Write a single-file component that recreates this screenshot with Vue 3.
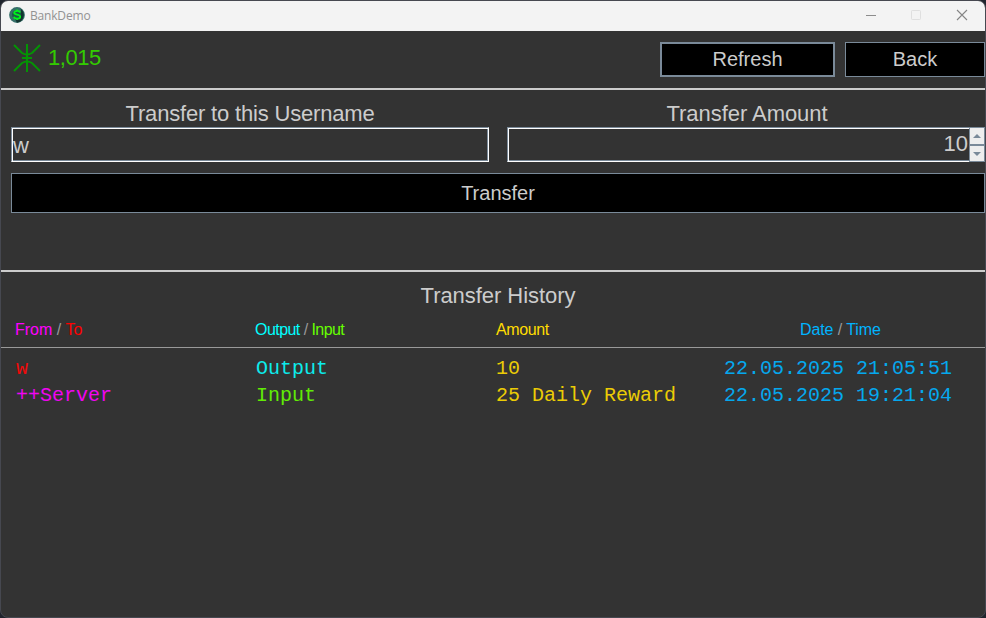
<script setup>
import { ref } from 'vue'

const username = ref('w')
const amount = ref('10')
const history = [
  { name: 'w', kind: 'Output', amount: '10', date: '22.05.2025 21:05:51' },
  { name: '++Server', kind: 'Input', amount: '25 Daily Reward', date: '22.05.2025 19:21:04' },
]
</script>

<template>
  <div class="desktop">
    <div class="window">
      <header class="titlebar">
        <svg class="app-icon" viewBox="0 0 16 16" width="16" height="16">
          <circle cx="8" cy="8" r="7.9" fill="#356f69" />
          <path d="M11.8 1.8A7.9 7.9 0 0 1 8 15.8L6 12L12 5Z" fill="#12342f" />
          <circle cx="7.6" cy="7.8" r="4.6" fill="#1a5c45" />
          <path d="M11 5.6C10.7 4.3 9.5 3.9 8.2 3.9C6.4 3.9 5.2 4.6 5.2 5.8C5.2 8.3 11.2 7 11.2 9.7C11.2 11 9.9 11.7 8.2 11.7C6.4 11.7 5.2 11.1 4.9 9.8" fill="none" stroke="#00f51c" stroke-width="1.8" />
          <path d="M8.1 2.6V4M8.1 11.6V13" stroke="#00f51c" stroke-width="1.6" />
        </svg>
        <span class="title">BankDemo</span>
        <svg class="controls" width="104" height="12" viewBox="0 0 104 12" fill="none">
          <path d="M0 6.5H10" stroke="#8c8c8c" />
          <rect x="45.5" y="1.5" width="9" height="9" rx=".7" stroke="#dfdfdf" />
          <path d="M91 1L101 11M101 1L91 11" stroke="#858585" stroke-width="1.1" />
        </svg>
      </header>

      <section class="toolbar">
        <svg class="coin" width="28" height="28" viewBox="0 0 28 28" fill="none" stroke="#049404" stroke-width="2">
          <path d="M14 0V28M9 14H19" />
          <path d="M1 1L9 9Q14 11.8 19 9L27 1M1 27L9 19Q14 16.2 19 19L27 27" />
        </svg>
        <span class="balance">1,015</span>
        <button class="btn refresh">Refresh</button>
        <button class="btn back">Back</button>
      </section>

      <section class="form">
        <div class="fields">
          <label class="field">
            <span class="heading user-label">Transfer to this Username</span>
            <input v-model="username" class="box" />
          </label>
          <div class="field">
            <span class="heading amount-label">Transfer Amount</span>
            <div class="spinner">
              <input v-model="amount" class="box amount-input" />
              <div class="steps">
                <button class="step"><svg width="8" height="4" viewBox="0 0 8 4"><path d="M0 4L4 0L8 4Z" fill="#7a8a99" /></svg></button>
                <button class="step down"><svg width="8" height="4" viewBox="0 0 8 4"><path d="M0 0L4 4L8 0Z" fill="#7a8a99" /></svg></button>
              </div>
            </div>
          </div>
        </div>
        <button class="btn transfer">Transfer</button>
      </section>

      <section class="history">
        <h2 class="heading history-title">Transfer History</h2>
        <div class="grid head">
          <span class="from-head"><span class="magenta">From</span> / <span class="red">To</span></span>
          <span class="kind-head"><span class="cyan">Output</span> / <span class="green">Input</span></span>
          <span class="amount-head yellow">Amount</span>
          <span class="date-head"><span class="blue">Date</span> / <span class="blue">Time</span></span>
        </div>
        <div class="rows">
          <div v-for="row in history" :key="row.date" class="grid row">
            <span :class="row.kind === 'Output' ? 'red' : 'magenta'">{{ row.name }}</span>
            <span :class="row.kind === 'Output' ? 'cyan' : 'green'">{{ row.kind }}</span>
            <span class="yellow">{{ row.amount }}</span>
            <span class="blue">{{ row.date }}</span>
          </div>
        </div>
      </section>
    </div>
  </div>
</template>

<style>
body { background: #20242d; overflow: hidden; }
</style>

<style scoped>
* { box-sizing: border-box; }
.desktop { width: 986px; height: 618px; background: #20242d; }
.window {
  width: 986px; height: 618px; border: 1px solid #464850; border-radius: 8px;
  overflow: hidden; background: #333; color: #ccc;
  font-family: "Liberation Sans", Arial, sans-serif;
  display: flex; flex-direction: column;
}
.titlebar { height: 30px; background: #f3f3f3; display: flex; align-items: center; padding: 0 15px 2px 8px; flex: none; }
.title { font: 12px/16px "Open Sans", sans-serif; color: #929292; margin-left: 5px; padding-top: 2px; letter-spacing: -.18px; }
.controls { margin-left: auto; }
.toolbar { height: 59px; flex: none; border-bottom: 2px solid #ccc; display: flex; align-items: flex-start; padding-top: 11px; }
.coin { margin: 2px 0 0 12px; }
.balance { font-size: 22px; line-height: 26px; margin: 3px auto 0 7px; color: #33cc00; letter-spacing: -.45px; }
button, input { font-family: inherit; margin: 0; padding: 0; border-radius: 0; outline: none; }
.btn { background: #000; color: #ccc; border: 1px solid #7a8a99; font-size: 20px; line-height: 24px; }
.refresh { width: 175px; height: 35px; border-width: 2px; margin-right: 10px; padding-bottom: 2px; }
.back { width: 140px; height: 35px; padding-bottom: 2px; }
.form { height: 182px; flex: none; border-bottom: 2px solid #ccc; padding: 11px 0 0 10px; }
.fields { display: grid; grid-template-columns: 478px 478px; gap: 18px; }
.field { display: flex; flex-direction: column; }
.heading { font-size: 22px; line-height: 26px; text-align: center; font-weight: 400; letter-spacing: -.05px; }
.user-label { letter-spacing: -.18px; }
.amount-label { padding-left: 2px; }
.box {
  height: 35px; width: 100%; background: #333; color: #ccc; font-size: 22px; line-height: 28px;
  border: 1px solid #fff; border-top-color: #7a8a99; border-left-color: #7a8a99;
  box-shadow: inset 1px 1px #fff, inset -1px -1px #7a8a99; padding: 3px 0 0 1px;
}
.spinner { display: flex; height: 35px; }
.amount-input { flex: 1; width: 0; text-align: right; border-right: 0; box-shadow: inset 1px 1px #fff, inset 0 -1px #7a8a99; padding: 0 1px 2px 0; }
.steps { width: 16px; display: flex; flex-direction: column; }
.step { height: 18px; background: #eee; border: 1px solid #7a8a99; display: flex; align-items: center; justify-content: center; }
.down { height: 17px; }
.transfer { width: 974px; height: 40px; margin-top: 11px; display: block; }
.history-title { margin: 0; padding: 11px 0 0 10px; height: 48px; }
.grid { display: grid; grid-template-columns: 240px 240px 228px 1fr; padding-left: 15px; }
.head { height: 28px; border-bottom: 1px solid #999; padding-left: 14px; font-size: 16px; line-height: 20px; letter-spacing: 0; color: #999; }
.kind-head { letter-spacing: -.55px; }
.amount-head { padding-left: 1px; letter-spacing: -.4px; }
.date-head { padding-left: 77px; letter-spacing: -.1px; }
.rows { padding-top: 7px; }
.row { font: 20px/27px "Liberation Mono", "Courier New", monospace; white-space: pre; }
.magenta { color: #f0f; }
.red { color: #f00; }
.cyan { color: #0ff; }
.green { color: #6f0; }
.yellow { color: #ffdc00; }
.blue { color: #00b4ff; }
.row .red { color: #f00a0a; }
.row .magenta { color: #f005f0; }
.row .cyan { color: #0cebeb; }
.row .green { color: #61eb05; }
.row .yellow { color: #ebcc05; }
.row .blue { color: #05a8ee; }
</style>
